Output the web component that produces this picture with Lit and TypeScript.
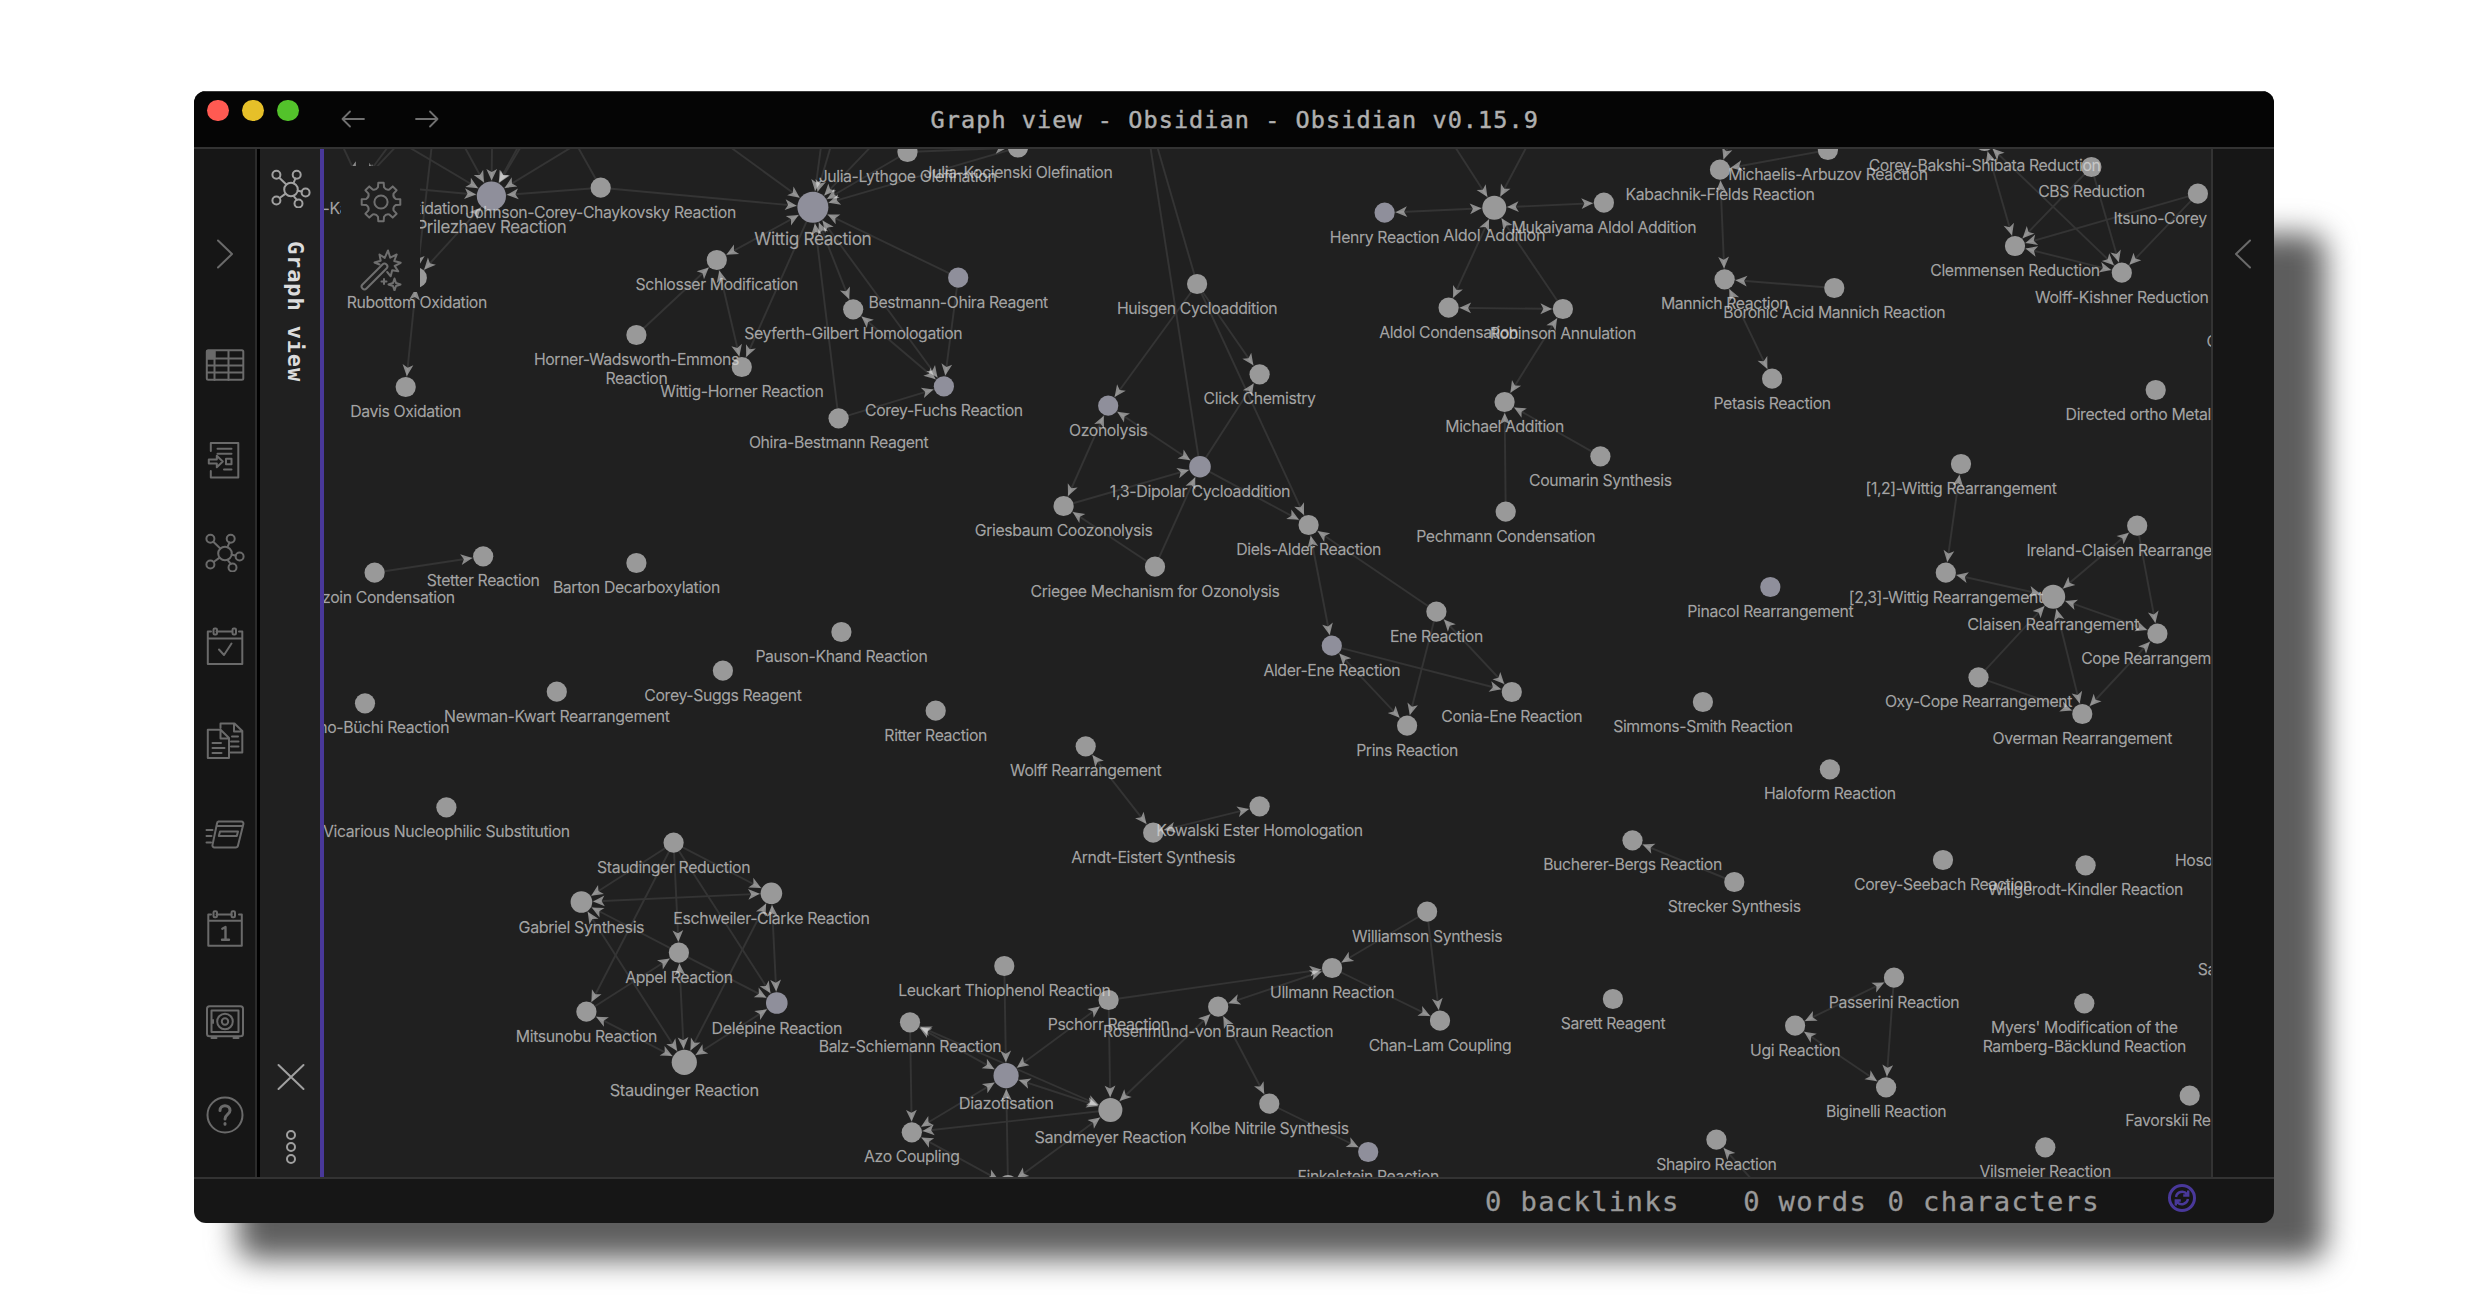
import { LitElement, html, svg, css } from "lit";
import { customElement } from "lit/decorators.js";

type GraphNode = {
  x: number;
  y: number;
  r?: number;
  tinted?: boolean;
  label?: string[];
  dy?: number;
  size?: number;
};

const n = (x: number, y: number, label: string, extra: Partial<GraphNode> = {}): GraphNode => ({
  x, y, label: label ? label.split("|") : [], ...extra,
});
const T = { tinted: true };

const NODES: Record<string, GraphNode> = {
  jacobsen: n(360.5, 184, "Jacobsen-Katsuki Epoxidation"),
  prilezhaev: n(491.4, 196, "Prilezhaev Reaction", { r: 14.6, tinted: true, dy: 36.3, size: 16.9 }),
  chaykovsky: n(600.7, 187.7, "Johnson-Corey-Chaykovsky Reaction"),
  rubottom: n(416.8, 277.7, "Rubottom Oxidation"),
  davis: n(405.7, 387, "Davis Oxidation"),
  schlosser: n(716.8, 260, "Schlosser Modification"),
  hwe: n(636.4, 335, "Horner-Wadsworth-Emmons|Reaction"),
  horner: n(741.8, 367, "Wittig-Horner Reaction"),
  wittig: n(812.9, 207.3, "Wittig Reaction", { r: 15.5, tinted: true, dy: 37, size: 17.3 }),
  lythgoe: n(907.5, 152, "Julia-Lythgoe Olefination"),
  kocienski: n(1018, 147.5, "Julia-Kocienski Olefination"),
  seyferth: n(853.2, 309.3, "Seyferth-Gilbert Homologation"),
  fuchs: n(943.9, 386.3, "Corey-Fuchs Reaction", T),
  bestmann: n(958.2, 277.7, "Bestmann-Ohira Reagent", T),
  ohira: n(838.6, 418.3, "Ohira-Bestmann Reagent"),
  huisgen: n(1197.1, 284, "Huisgen Cycloaddition"),
  dipolar: n(1200, 466.7, "1,3-Dipolar Cycloaddition", { r: 10.8, tinted: true, dy: 30.2, size: 16 }),
  ozonolysis: n(1108.2, 405.7, "Ozonolysis", T),
  click: n(1259.6, 374.3, "Click Chemistry"),
  griesbaum: n(1063.6, 506, "Griesbaum Coozonolysis"),
  criegee: n(1155, 566.7, "Criegee Mechanism for Ozonolysis"),
  diels: n(1308.6, 525, "Diels-Alder Reaction"),
  alder: n(1331.8, 645.7, "Alder-Ene Reaction", T),
  ene: n(1436.4, 611.7, "Ene Reaction"),
  conia: n(1511.8, 692, "Conia-Ene Reaction"),
  prins: n(1407.1, 725.7, "Prins Reaction"),
  henry: n(1384.6, 212.7, "Henry Reaction", T),
  aldol: n(1494.3, 207.7, "Aldol Addition", { r: 12, dy: 32.7, size: 16.3 }),
  mukaiyama: n(1603.9, 202.7, "Mukaiyama Aldol Addition"),
  aldolCond: n(1448.6, 307.7, "Aldol Condensation"),
  robinson: n(1562.9, 309, "Robinson Annulation"),
  michael: n(1504.6, 402, "Michael Addition"),
  coumarin: n(1600.4, 456.3, "Coumarin Synthesis"),
  pechmann: n(1505.7, 511.7, "Pechmann Condensation"),
  kabachnik: n(1720, 169.7, "Kabachnik-Fields Reaction"),
  mannich: n(1724.6, 279.3, "Mannich Reaction"),
  petasis: n(1772.1, 378.7, "Petasis Reaction"),
  michaelis: n(1827.9, 150, "Michaelis-Arbuzov Reaction"),
  boronic: n(1834.3, 288, "Boronic Acid Mannich Reaction"),
  bakshi: n(1984.6, 141, "Corey-Bakshi-Shibata Reduction"),
  cbs: n(2091.4, 167, "CBS Reduction", { dy: 29.5 }),
  clemmensen: n(2015, 246, "Clemmensen Reduction"),
  kishner: n(2121.8, 272.7, "Wolff-Kishner Reduction"),
  itsuno: n(2197.9, 193.7, "Itsuno-Corey Reduction"),
  ortho: n(2155.7, 390, "Directed ortho Metalation"),
  wittig12: n(1961, 464, "[1,2]-Wittig Rearrangement"),
  wittig23: n(1945.8, 572.7, "[2,3]-Wittig Rearrangement"),
  ireland: n(2137.2, 525.7, "Ireland-Claisen Rearrangement"),
  claisen: n(2053.2, 596.7, "Claisen Rearrangement", { r: 12, dy: 32.6, size: 16.3 }),
  cope: n(2157.4, 633.7, "Cope Rearrangement"),
  oxycope: n(1978.5, 677.3, "Oxy-Cope Rearrangement"),
  overman: n(2082.3, 714, "Overman Rearrangement"),
  pinacol: n(1770.3, 587, "Pinacol Rearrangement", T),
  simmons: n(1702.9, 702, "Simmons-Smith Reaction"),
  haloform: n(1829.9, 769.3, "Haloform Reaction"),
  benzoin: n(374.6, 572.7, "Benzoin Condensation"),
  stetter: n(483.2, 556.3, "Stetter Reaction", { dy: 29 }),
  barton: n(636.4, 563, "Barton Decarboxylation"),
  paterno: n(365, 703.3, "Paterno-Büchi Reaction"),
  newman: n(556.8, 691.7, "Newman-Kwart Rearrangement"),
  suggs: n(722.9, 670.7, "Corey-Suggs Reagent"),
  pauson: n(841.4, 632, "Pauson-Khand Reaction"),
  ritter: n(935.7, 710.7, "Ritter Reaction"),
  wolff: n(1085.7, 746.3, "Wolff Rearrangement"),
  arndt: n(1153.2, 832.7, "Arndt-Eistert Synthesis"),
  kowalski: n(1259.6, 806.3, "Kowalski Ester Homologation"),
  vicarious: n(446.4, 807.3, "Vicarious Nucleophilic Substitution"),
  staudRed: n(673.6, 842.7, "Staudinger Reduction"),
  gabriel: n(581.4, 902, "Gabriel Synthesis", { r: 10.8, dy: 30.4, size: 16 }),
  eschweiler: n(771.4, 893.3, "Eschweiler-Clarke Reaction", { r: 10.8, dy: 30.4, size: 15.9 }),
  appel: n(678.9, 952.7, "Appel Reaction"),
  mitsunobu: n(586.4, 1011.7, "Mitsunobu Reaction"),
  delepine: n(776.8, 1003, "Delépine Reaction", { r: 10.8, tinted: true, dy: 30.4, size: 16 }),
  staud: n(684.3, 1062.3, "Staudinger Reaction", { r: 12.6, dy: 33.5, size: 16.4 }),
  leuckart: n(1004.3, 966, "Leuckart Thiophenol Reaction"),
  pschorr: n(1108.6, 1000, "Pschorr Reaction"),
  balz: n(910, 1022.3, "Balz-Schiemann Reaction"),
  diazo: n(1006.1, 1075.7, "Diazotisation", { r: 12.6, tinted: true, dy: 33.3, size: 16.4 }),
  sandmeyer: n(1110.4, 1110, "Sandmeyer Reaction", { r: 12, dy: 32.6, size: 16.3 }),
  azo: n(911.8, 1132.3, "Azo Coupling"),
  lower: n(1008, 1185, "", { r: 10 }),
  rosenmund: n(1218.2, 1006.7, "Rosenmund-von Braun Reaction"),
  ullmann: n(1332.1, 968, "Ullmann Reaction"),
  williamson: n(1427.1, 911.7, "Williamson Synthesis"),
  chanlam: n(1440, 1020.7, "Chan-Lam Coupling"),
  kolbe: n(1269.3, 1103.7, "Kolbe Nitrile Synthesis"),
  finkelstein: n(1368.2, 1152, "Finkelstein Reaction", T),
  bucherer: n(1632.5, 840.3, "Bucherer-Bergs Reaction"),
  strecker: n(1734.3, 882, "Strecker Synthesis"),
  sarett: n(1612.9, 999, "Sarett Reagent"),
  shapiro: n(1716.4, 1139.7, "Shapiro Reaction"),
  seebach: n(1943, 860, "Corey-Seebach Reaction"),
  willgerodt: n(2085.6, 865.3, "Willgerodt-Kindler Reaction"),
  passerini: n(1894, 977.7, "Passerini Reaction"),
  ugi: n(1795.1, 1025.7, "Ugi Reaction"),
  biginelli: n(1886.1, 1087.3, "Biginelli Reaction"),
  myers: n(2084.3, 1003.3, "Myers' Modification of the|Ramberg-Bäcklund Reaction"),
  favorskii: n(2189.7, 1095.7, "Favorskii Reaction"),
  vilsmeier: n(2045.3, 1147.3, "Vilsmeier Reaction"),
};

/** "a>b" is a one-way link, "a=b" a mutual one. */
const LINKS = `jacobsen>prilezhaev prilezhaev=rubottom rubottom=davis chaykovsky>prilezhaev
chaykovsky>wittig wittig=schlosser hwe>schlosser schlosser=horner wittig>horner lythgoe>wittig
lythgoe>kocienski kocienski>wittig wittig=seyferth seyferth=fuchs wittig=fuchs bestmann>wittig
bestmann>fuchs ohira>fuchs ohira>wittig huisgen>ozonolysis huisgen>click huisgen>diels
dipolar>click ozonolysis=dipolar griesbaum=ozonolysis griesbaum>dipolar criegee>griesbaum
criegee>dipolar dipolar>diels diels=alder ene>diels ene=conia ene>prins alder>conia alder=prins
henry=aldol mukaiyama=aldol aldolCond=aldol robinson>aldol aldolCond=robinson robinson=michael
coumarin>michael pechmann>michael kabachnik=mannich michaelis>kabachnik boronic>mannich
mannich=petasis bakshi=clemmensen bakshi=kishner cbs>clemmensen cbs>kishner itsuno>clemmensen
itsuno>kishner clemmensen=kishner wittig12=wittig23 wittig23=claisen ireland=claisen ireland>cope
claisen=cope oxycope>claisen oxycope>overman claisen=overman cope=overman benzoin>stetter
wolff=arndt arndt=kowalski staudRed>gabriel staudRed>appel staudRed>mitsunobu staudRed>eschweiler
staudRed>delepine gabriel=eschweiler appel>gabriel appel>delepine mitsunobu>appel staud=gabriel
staud=appel staud=mitsunobu staud=eschweiler staud=delepine eschweiler=delepine leuckart>diazo
pschorr=diazo balz=diazo balz=sandmeyer balz>azo diazo=azo sandmeyer>azo diazo=sandmeyer
pschorr>sandmeyer pschorr>ullmann rosenmund=sandmeyer rosenmund=ullmann rosenmund=kolbe
kolbe>finkelstein lower=azo lower=sandmeyer lower>diazo williamson>ullmann williamson>chanlam
ullmann>chanlam strecker>bucherer passerini=ugi passerini>biginelli ugi=biginelli`.split(/\s+/);

/** Links that come in from nodes beyond the viewport: target, entry point, arrow shown. */
const INCOMING: [string, number, number, boolean][] = [
  ["jacobsen", 344, 149, true], ["jacobsen", 386.4, 149, true], ["jacobsen", 393.6, 149, true],
  ["rubottom", 431.4, 149, true],
  ["prilezhaev", 412, 149, true], ["prilezhaev", 465.7, 149, true], ["prilezhaev", 492, 149, true],
  ["prilezhaev", 517, 149, true], ["prilezhaev", 519.5, 149, true], ["prilezhaev", 568.6, 149, true],
  ["chaykovsky", 579, 149, false],
  ["wittig", 732.9, 149, true], ["wittig", 820.7, 149, true], ["wittig", 830, 149, true],
  ["wittig", 868.6, 149, true],
  ["huisgen", 1157.9, 149, false], ["dipolar", 1150.7, 149, false],
  ["aldol", 1456.4, 149, true], ["aldol", 1525.4, 149, true],
  ["kabachnik", 1727, 149, true], ["shapiro", 1748.6, 1176, true],
];

/** Labels whose nodes lie past the right edge. */
const EDGE_LABELS: [string, number, number][] = [
  ["C", 2206.5, 347], ["Hosomi", 2175, 866], ["Sak", 2197.8, 975],
];

function arrow(from: { x: number; y: number }, to: GraphNode) {
  const a = Math.atan2(to.y - from.y, to.x - from.x);
  const d = (to.r ?? 10.1) + 0.8;
  const x = to.x - Math.cos(a) * d;
  const y = to.y - Math.sin(a) * d;
  return svg`<path class="arrow" d="M0 0L-11.6 -5.4L-8.6 0L-11.6 5.4Z"
    transform="translate(${x.toFixed(1)} ${y.toFixed(1)}) rotate(${((a * 180) / Math.PI).toFixed(1)})"></path>`;
}

@customElement("reaction-graph")
class ReactionGraph extends LitElement {
  static styles = css`
    :host { display: block; position: relative; overflow: hidden; background: #202020; }
    .canvas { display: block; width: 100%; height: 100%; }
    .link { stroke: #343434; stroke-width: 1.9; }
    .arrow { fill: #fff; fill-opacity: 0.48; }
    .node { fill: #999; }
    .node-tinted { fill: #8f8f9b; }
    .label {
      fill: #dcdcdc; fill-opacity: 0.7; font-family: Inter, "Liberation Sans", sans-serif;
      text-anchor: middle; letter-spacing: -0.38px; stroke: #dcdcdc; stroke-opacity: 0.25; stroke-width: 0.3;
    }
    .label-start { text-anchor: start; }
    .controls {
      position: absolute; left: 17px; top: 17px; width: 79px; height: 126px;
      background: #202020; display: flex; flex-direction: column; align-items: center;
      padding-top: 15px; box-sizing: border-box; gap: 26px;
    }
    .icon { width: 42px; height: 42px; flex: none; fill: none; stroke: #6f6f6f; stroke-width: 2; stroke-linejoin: round; stroke-linecap: round; }
  `;

  render() {
    const lines: unknown[] = [];
    const arrows: unknown[] = [];
    for (const link of LINKS) {
      const [a, b] = link.split(/[>=]/).map((id) => NODES[id]);
      lines.push(svg`<line class="link" x1=${a.x} y1=${a.y} x2=${b.x} y2=${b.y}></line>`);
      arrows.push(arrow(a, b));
      if (link.includes("=")) arrows.push(arrow(b, a));
    }
    for (const [id, px, py, tip] of INCOMING) {
      const t = NODES[id];
      const s = { x: t.x + (px - t.x) * 1.5, y: t.y + (py - t.y) * 1.5 };
      lines.push(svg`<line class="link" x1=${s.x} y1=${s.y} x2=${t.x} y2=${t.y}></line>`);
      if (tip) arrows.push(arrow(s, t));
    }
    const nodes = Object.values(NODES);
    return html`
      <svg class="canvas" viewBox="324 149 1887 1028">
        ${lines}${arrows}
        ${nodes.map((d) => svg`<circle class="node ${d.tinted ? "node-tinted" : ""}" cx=${d.x} cy=${d.y} r=${d.r ?? 10.1}></circle>`)}
        ${nodes.map((d) => (d.label ?? []).map((line, i) => svg`<text class="label" x=${d.x}
          y=${d.y + (d.dy ?? 29.7) + 0.3 + i * 18.7} font-size=${d.size ?? 15.8}>${line}</text>`))}
        ${EDGE_LABELS.map(([t, x, y]) => svg`<text class="label label-start" x=${x} y=${y} font-size="15.8">${t}</text>`)}
      </svg>
      <div class="controls">
        <svg class="icon" viewBox="0 0 42 42">
          <circle cx="21" cy="21" r="6.6"></circle>
          <path d=${gearPath()}></path>
        </svg>
        <svg class="icon" viewBox="0 0 42 42">
          <path d="M20.500 17.500L2.500 35.500a2.800 2.800 0 0 0 4 4L26.500 19.500a2.800 2.800 0 0 0-4-4z"></path>
          <path d="M19.500 15.500L14.500 13.500l6.200-1.800-1.200-6.200 5.200 3.400 3.300-7.400 2.200 7.200 6.500-3.200-2.500 6.500 6.500 1.800-6 3.200 3.500 5.300-6-1-1.500 6-3.500-4.300"></path>
          <path d="M34.500 29.500l1.500 4.500 4.500 1.500-4.500 1.500-1.500 4.500-1.500-4.500-4.500-1.500 4.500-1.500zM24 30v5M21.500 32.500h5"></path>
        </svg>
      </div>`;
  }
}

/** Eight-toothed gear with arcs for the valleys between the teeth. */
function gearPath() {
  const at = (angle: number, r: number) =>
    `${(21 + Math.cos(angle) * r).toFixed(1)} ${(21 + Math.sin(angle) * r).toFixed(1)}`;
  let d = "";
  for (let i = 0; i < 8; i++) {
    const base = (i * Math.PI) / 4 - Math.PI / 2;
    d += `${d ? "A5 5 0 0 0 " : "M"}${at(base - 0.2, 15)}L${at(base - 0.14, 19.5)}L${at(base + 0.14, 19.5)}L${at(base + 0.2, 15)}`;
  }
  return `${d}A5 5 0 0 0 ${at(-Math.PI / 2 - 0.2, 15)}Z`;
}

const graphGlyph = svg`
  <circle cx="20" cy="21.500" r="6.800"></circle>
  <circle cx="5.400" cy="6.700" r="4"></circle><circle cx="25.700" cy="6.700" r="4"></circle>
  <circle cx="34.600" cy="24.500" r="4"></circle><circle cx="27.500" cy="35.500" r="4"></circle>
  <circle cx="5.400" cy="32.500" r="4"></circle>
  <path d="M8.300 9.700l7 6.800M24.400 10.500l-1.900 4.700M26.700 22.700l4 .8M22.500 27.800l3.300 4M8.600 30l6-4.400"></path>`;

const RIBBON = [
  svg`<rect x="1.800" y="5.300" width="36.500" height="29.500" rx="1.500"></rect>
    <path d="M2 13.500h36M2 20.500h36M2 27.500h36M9.500 6v29M23.500 6v29"></path>
    <path class="solid" d="M2 6h7.500v7.500H2z"></path>`,
  svg`<path d="M5.800 12V4h27.500v34.500H5.800V32"></path>
    <path d="M12.500 9.800h14M12.500 14.800h14M19 30.500h7.500M21 19.800h5.500v5.500H21z"></path>
    <path d="M3.800 20.500h8v-3.800l6 5.800-6 5.800v-3.800h-8z"></path>`,
  graphGlyph,
  svg`<path d="M6 5.500H2.800v32.500h34.500V5.500H34M11.500 5.500h15M2.800 12.500h34.500M14 23.500l5 5.500 7.500-11.500"></path>
    <rect x="8.500" y="2.500" width="3.500" height="6" rx="1.200"></rect><rect x="27.500" y="2.500" width="3.500" height="6" rx="1.200"></rect>`,
  svg`<path d="M15.500 8V3.500h14l7.800 7.500v21.500H25.500M29 3.500V11.500h8"></path>
    <path d="M2.800 9.800h12.800L24 18v20H2.800zM15.500 10v8.500H24"></path>
    <path d="M7.500 23h8.500M7.500 28h12M7.500 33h9M27 16.500h6M26 21.500h7.500M26 26.500h7.500"></path>`,
  svg`<path d="M13.500 7.500h23a2 2 0 0 1 1.900 2.500l-5.400 21.500a2.500 2.500 0 0 1-2.400 2H9.500a2 2 0 0 1-2-2.600L12 9.500a2.200 2.200 0 0 1 1.500-2z"></path>
    <path d="M12 12h25M15 17.500h18l-1.200 4.500H13.800zM1.500 16h6M1.500 22h5M1.500 28.500h4.500"></path>`,
  svg`<path d="M6 6.500H3.300v31.300h33.500V6.500H34M11.500 6.500h15M3.300 12.800h33.500"></path>
    <path class="numeral" d="M17.300 20.700l3.200-1.700v12.500M17 31.700h7"></path>
    <rect x="8.500" y="3.300" width="3.500" height="6" rx="1.200"></rect><rect x="26.500" y="3.300" width="3.500" height="6" rx="1.200"></rect>`,
  svg`<rect x="2" y="5.300" width="36" height="30" rx="2.500"></rect><rect x="6.500" y="9.500" width="27" height="21.500"></rect>
    <circle cx="20" cy="20.500" r="7.800"></circle><circle cx="20" cy="20.500" r="3.200"></circle>
    <path d="M6.500 37h5M28.500 37h5M8 19v3"></path>`,
  svg`<circle cx="20" cy="20" r="17.500"></circle>
    <path class="heavy" d="M15 15.500c0-6.500 10-6.200 10 0 0 4-5 4-5 8.500M20 28.500v.8"></path>`,
];

@customElement("app-root")
class AppRoot extends LitElement {
  static styles = css`
    :host { display: block; width: 2468px; height: 1314px; background: #fff; overflow: hidden; box-sizing: border-box; padding: 91px 194px; }
    .stage { position: relative; width: 2080px; height: 1132px; }
    .shadow {
      position: absolute; left: 44px; top: 143px; width: 2087px; height: 1025px; border-radius: 16px;
      background: #5d5d5d; filter: blur(15px);
    }
    .window {
      position: relative; width: 2080px; height: 1132px; border-radius: 12px; overflow: hidden;
      display: flex; flex-direction: column; background: #161616;
      font-family: "DejaVu Sans Mono", "Liberation Mono", monospace;
    }
    .titlebar {
      height: 58px; box-sizing: border-box; flex: none; background: #050505; border-bottom: 2px solid #333;
      border-top: 1px solid #3a3a3a; display: grid; grid-template-columns: 1fr auto 1fr; align-items: center;
    }
    .left { display: flex; align-items: flex-start; height: 100%; }
    .lights { display: flex; gap: 13.600px; padding: 7.500px 0 0 13px; }
    .light { width: 21.500px; height: 21.500px; border-radius: 50%; }
    .red { background: #ff5a52; }
    .yellow { background: #e6c029; }
    .green { background: #53c22b; }
    .nav { display: flex; gap: 50px; padding: 15px 0 0 42px; }
    .nav-icon { width: 24px; height: 24px; fill: none; stroke: #707070; stroke-width: 1.800; stroke-linecap: round; stroke-linejoin: round; }
    .title {
      font-size: 23.500px; color: #b0b0b0; white-space: pre; line-height: 30px; letter-spacing: 1.060px;
      padding: 1.500px 0 0 1.500px; -webkit-text-stroke: 0.450px #b0b0b0;
    }
    .body { flex: 1; min-height: 0; display: flex; }
    .ribbon {
      width: 63px; box-sizing: border-box; flex: none; background: #161616; border-right: 2px solid #2b2b2b;
      display: flex; flex-direction: column; align-items: center; padding-top: 85px; gap: 53.800px;
    }
    .ribbon-icon { width: 40px; height: 40px; flex: none; fill: none; stroke: #6a6a6a; stroke-width: 2; stroke-linejoin: round; stroke-linecap: round; }
    .chevron { margin-bottom: 17px; }
    .solid { fill: #6a6a6a; }
    .heavy { stroke-width: 3; }
    .numeral { stroke-width: 2.400; }
    .divider { width: 3px; flex: none; background: #000; }
    .view-header {
      width: 60px; flex: none; background: #202020; display: flex; flex-direction: column; align-items: center;
      padding: 18.500px 0 10px 1px; box-sizing: border-box;
    }
    .view-icon { width: 40px; height: 40px; flex: none; fill: none; stroke: #a0a0a0; stroke-width: 2; stroke-linecap: round; }
    .view-title {
      writing-mode: vertical-rl; font-weight: bold; font-size: 22px; letter-spacing: 0.860px; line-height: 30px; color: #dcdcdc;
      white-space: pre; margin: 33.500px 0 auto 8px;
    }
    .dots { margin-top: 30px; }
    .accent { width: 4px; flex: none; background: #49389a; }
    .graph { flex: 1; min-width: 0; }
    .right {
      width: 63px; flex: none; box-sizing: border-box; border-left: 2px solid #333; background: #161616;
      display: flex; flex-direction: column; align-items: center; padding: 85px 2px 0 0;
    }
    .status {
      height: 46px; flex: none; box-sizing: border-box; border-top: 2px solid #333; display: flex; justify-content: flex-end;
      align-items: center; font-size: 27.200px; letter-spacing: 1.330px; color: #9a9a9a; line-height: 34px;
      padding: 2px 77px 0 0; white-space: pre; -webkit-text-stroke: 0.300px #9a9a9a;
    }
    .backlinks { margin-right: 63.500px; }
    .words { margin-right: 20.500px; }
    .chars { margin-right: 67px; }
    .sync { width: 30px; height: 30px; margin-top: -9px; fill: none; stroke: #49389a; stroke-width: 3; }
  `;

  render() {
    return html`
      <div class="stage">
        <div class="shadow"></div>
        <div class="window">
          <div class="titlebar">
            <div class="left">
              <div class="lights">
                <span class="light red"></span><span class="light yellow"></span><span class="light green"></span>
              </div>
              <div class="nav">
                <svg class="nav-icon" viewBox="0 0 24 24"><path d="M23 12H1.500M9 4.500L1.500 12L9 19.500"></path></svg>
                <svg class="nav-icon" viewBox="0 0 24 24"><path d="M1 12h21.500M15 4.500L22.500 12L15 19.500"></path></svg>
              </div>
            </div>
            <div class="title">Graph view - Obsidian - Obsidian v0.15.9</div>
            <div></div>
          </div>
          <div class="body">
            <div class="ribbon">
              <svg class="ribbon-icon chevron" viewBox="0 0 40 40"><path d="M13 6.500L27 20L13 33.500"></path></svg>
              ${RIBBON.map((g) => html`<svg class="ribbon-icon" viewBox="0 0 40 40">${g}</svg>`)}
            </div>
            <div class="divider"></div>
            <div class="view-header">
              <svg class="view-icon" viewBox="0 0 40 40">${graphGlyph}</svg>
              <div class="view-title">Graph view</div>
              <svg class="view-icon" viewBox="0 0 40 40"><path d="M7.500 8L32.500 32M32.500 8L7.500 32"></path></svg>
              <svg class="view-icon dots" viewBox="0 0 40 40">
                <circle cx="20" cy="8" r="4"></circle><circle cx="20" cy="20" r="4"></circle><circle cx="20" cy="32" r="4"></circle>
              </svg>
            </div>
            <div class="accent"></div>
            <reaction-graph class="graph"></reaction-graph>
            <div class="right">
              <svg class="ribbon-icon" viewBox="0 0 40 40"><path d="M27 6.500L13 20L27 33.500"></path></svg>
            </div>
          </div>
          <div class="status">
            <span class="backlinks">0 backlinks</span>
            <span class="words">0 words</span>
            <span class="chars">0 characters</span>
            <svg class="sync" viewBox="0 0 30 30">
              <circle cx="15" cy="15" r="12.500"></circle>
              <path d="M9 14a6.300 6.300 0 0 1 11-3M21 16a6.300 6.300 0 0 1-11 3M21.200 7.500v5h-5M8.800 22.500v-5h5" stroke-width="2.400"></path>
            </svg>
          </div>
        </div>
      </div>`;
  }
}
